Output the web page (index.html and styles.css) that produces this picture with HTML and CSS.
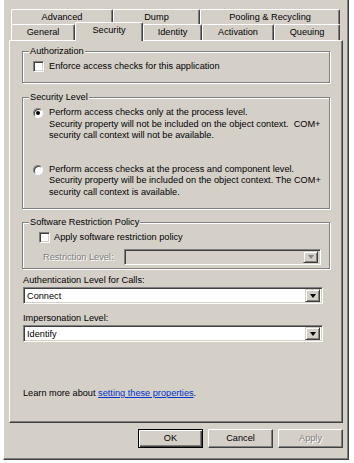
FILE: index.html
```html
<!DOCTYPE html>
<html lang="en">
<head>
  <meta charset="UTF-8">
  <meta name="viewport" content="width=device-width, initial-scale=1.0">
  <title>Application Properties</title>
  <link rel="stylesheet" href="styles.css">
</head>
<body>
  <div class="window">
    <!-- Tab strip, two rows -->
    <div class="tabs">
      <div class="tab-row top">
        <div class="tab t-advanced">Advanced</div>
        <div class="tab t-dump">Dump</div>
        <div class="tab t-pooling">Pooling &amp; Recycling</div>
      </div>
      <div class="tab-row bottom">
        <div class="tab t-general">General</div>
        <div class="tab t-security active">Security</div>
        <div class="tab t-identity">Identity</div>
        <div class="tab t-activation">Activation</div>
        <div class="tab t-queuing">Queuing</div>
      </div>
    </div>

    <!-- Security page -->
    <div class="panel">
      <div class="group auth">
        <div class="group-title">Authorization</div>
        <label class="check"><span class="box"></span>Enforce access checks for this application</label>
      </div>

      <div class="group level">
        <div class="group-title">Security Level</div>
        <label class="option first">
          <span class="radio on"></span>
          <span class="option-text">Perform access checks only at the process level.<br>Security property will not be included on the object context.&nbsp; COM+<br>security call context will not be available.</span>
        </label>
        <label class="option second">
          <span class="radio"></span>
          <span class="option-text">Perform access checks at the process and component level.<br>Security property will be included on the object context. The COM+<br>security call context is available.</span>
        </label>
      </div>

      <div class="group srp">
        <div class="group-title">Software Restriction Policy</div>
        <label class="check"><span class="box"></span>Apply software restriction policy</label>
        <div class="restrict-row">
          <span class="disabled-text">Restriction Level:</span>
          <div class="combo disabled"><span class="combo-btn"></span></div>
        </div>
      </div>

      <div class="field-label first">Authentication Level for Calls:</div>
      <div class="combo wide"><span class="combo-value">Connect</span><span class="combo-btn"></span></div>

      <div class="field-label">Impersonation Level:</div>
      <div class="combo wide"><span class="combo-value">Identify</span><span class="combo-btn"></span></div>

      <p class="learn">Learn more about <a href="#">setting these properties</a>.</p>
    </div>

    <!-- Dialog buttons -->
    <div class="buttons">
      <button class="btn default">OK</button>
      <button class="btn">Cancel</button>
      <button class="btn" disabled>Apply</button>
    </div>
  </div>
</body>
</html>
```

FILE: styles.css
```css
/* --- Base --- */
* {box-sizing:border-box;margin:0;padding:0}
body{background:#fff;font-family:"Liberation Sans",Arial,sans-serif;font-size:9.2px;color:#000;width:354px;height:463px;overflow:hidden}

/* --- Window frame --- */
.window{margin-left:3px;width:346px;height:460px;background:#d4d0c8;border-left:1px solid #fff;border-right:1px solid #404040;border-bottom:1px solid #404040;box-shadow:inset -1px -1px 0 #808080;padding:9px 5px 0}

/* --- Tabs --- */
.tab-row{display:flex;padding-left:2px}
.tab-row.top{height:15px}
.tab-row.bottom{height:16px}
.tab{text-align:center;white-space:nowrap;border:1px solid #fff;border-bottom:none;border-right-color:#404040;border-radius:2px 2px 0 0;box-shadow:inset -1px 0 0 #808080;background:#d4d0c8}
.top .tab{line-height:14px}
.bottom .tab{line-height:15px}
.tab.active{position:relative;z-index:1;margin-top:-2px;height:19px}
.t-advanced{width:102px}
.t-dump{width:87px}
.t-pooling{width:140px}
.t-general{width:64px}
.t-security{width:68px}
.t-identity{width:59px}
.t-activation{width:72px}
.t-queuing{width:66px}

/* --- Panel --- */
.panel{width:334px;height:383px;border:1px solid;border-color:#fff #404040 #404040 #fff;box-shadow:inset -1px -1px 0 #808080;padding:10px 12px 0}

/* --- Group boxes --- */
.group{border:1px solid #808080;box-shadow:1px 1px 0 #fff,inset 1px 1px 0 #fff;padding:0 10px}
.group-title{display:table;margin:-7px 0 0 -4px;padding:0 1px;line-height:12px;background:#d4d0c8}
.auth{padding-bottom:9px}
.auth .check{margin-top:3px}
.level{margin-top:14px;padding-bottom:10px}
.srp{margin-top:13px;padding:0 8px 3px 10px}
.srp .check{margin:3px 0 0 6px;gap:4px}

/* --- Checkbox & radio --- */
.check{display:flex;align-items:center;gap:5px;line-height:13px}
.box{width:11px;height:11px;background:#fff;border:1px solid;border-color:#808080 #fff #fff #808080;box-shadow:inset 1px 1px 0 #404040,inset -1px -1px 0 #d4d0c8}
.option{display:grid;grid-template-columns:10px 1fr;column-gap:6px;line-height:11.5px}
.option.first{margin-top:4px}
.option.second{margin-top:22px}
.option-text{white-space:nowrap}
.radio{width:10px;height:10px;margin-top:1px;border-radius:50%;background:#fff;border:1px solid;border-color:#808080 #fff #fff #808080;box-shadow:inset 1px 1px 0 #404040;display:flex;align-items:center;justify-content:center}
.radio.on::after{content:"";width:4px;height:4px;border-radius:50%;background:#000}

/* --- Restriction level row --- */
.restrict-row{display:flex;align-items:center;margin-top:5px;height:16px}
.disabled-text{margin-left:10px;color:#808080;text-shadow:1px 1px 0 #fff}

/* --- Combo boxes --- */
.combo{display:flex;align-items:center;height:17px;background:#fff;border:1px solid;border-color:#808080 #fff #fff #808080;box-shadow:inset 1px 1px 0 #404040,inset -1px -1px 0 #d4d0c8;padding:2px}
.combo.wide{width:300px;margin-left:1px}
.combo.disabled{width:197px;height:16px;margin-left:auto;background:#d4d0c8}
.combo-value{padding-left:1px}
.combo-btn{margin-left:auto;width:15px;height:13px;background:#d4d0c8;border:1px solid;border-color:#d4d0c8 #404040 #404040 #d4d0c8;box-shadow:inset 1px 1px 0 #fff,inset -1px -1px 0 #808080;display:flex;align-items:center;justify-content:center}
.disabled .combo-btn{height:12px}
.combo-btn::after{content:"";border-left:3px solid transparent;border-right:3px solid transparent;border-top:4px solid #000}
.disabled .combo-btn::after{border-top-color:#808080}

/* --- Fields below the groups --- */
.field-label{margin:8px 0 0 1px;line-height:13px}
.field-label.first{margin-top:5px}
.learn{margin:45px 0 0 1px;line-height:13px}
.learn a{color:#0033cc}

/* --- Buttons --- */
.buttons{display:flex;justify-content:flex-end;gap:5px;margin-top:6px}
.btn{width:65px;height:19px;font:inherit;color:#000;background:#d4d0c8;border:1px solid;border-color:#fff #404040 #404040 #fff;box-shadow:inset -1px -1px 0 #808080;line-height:17px}
.btn.default{border-color:#000;box-shadow:inset 1px 1px 0 #fff,inset -1px -1px 0 #404040,inset -2px -2px 0 #808080}
.btn:disabled{color:#808080;text-shadow:1px 1px 0 #fff}
```
